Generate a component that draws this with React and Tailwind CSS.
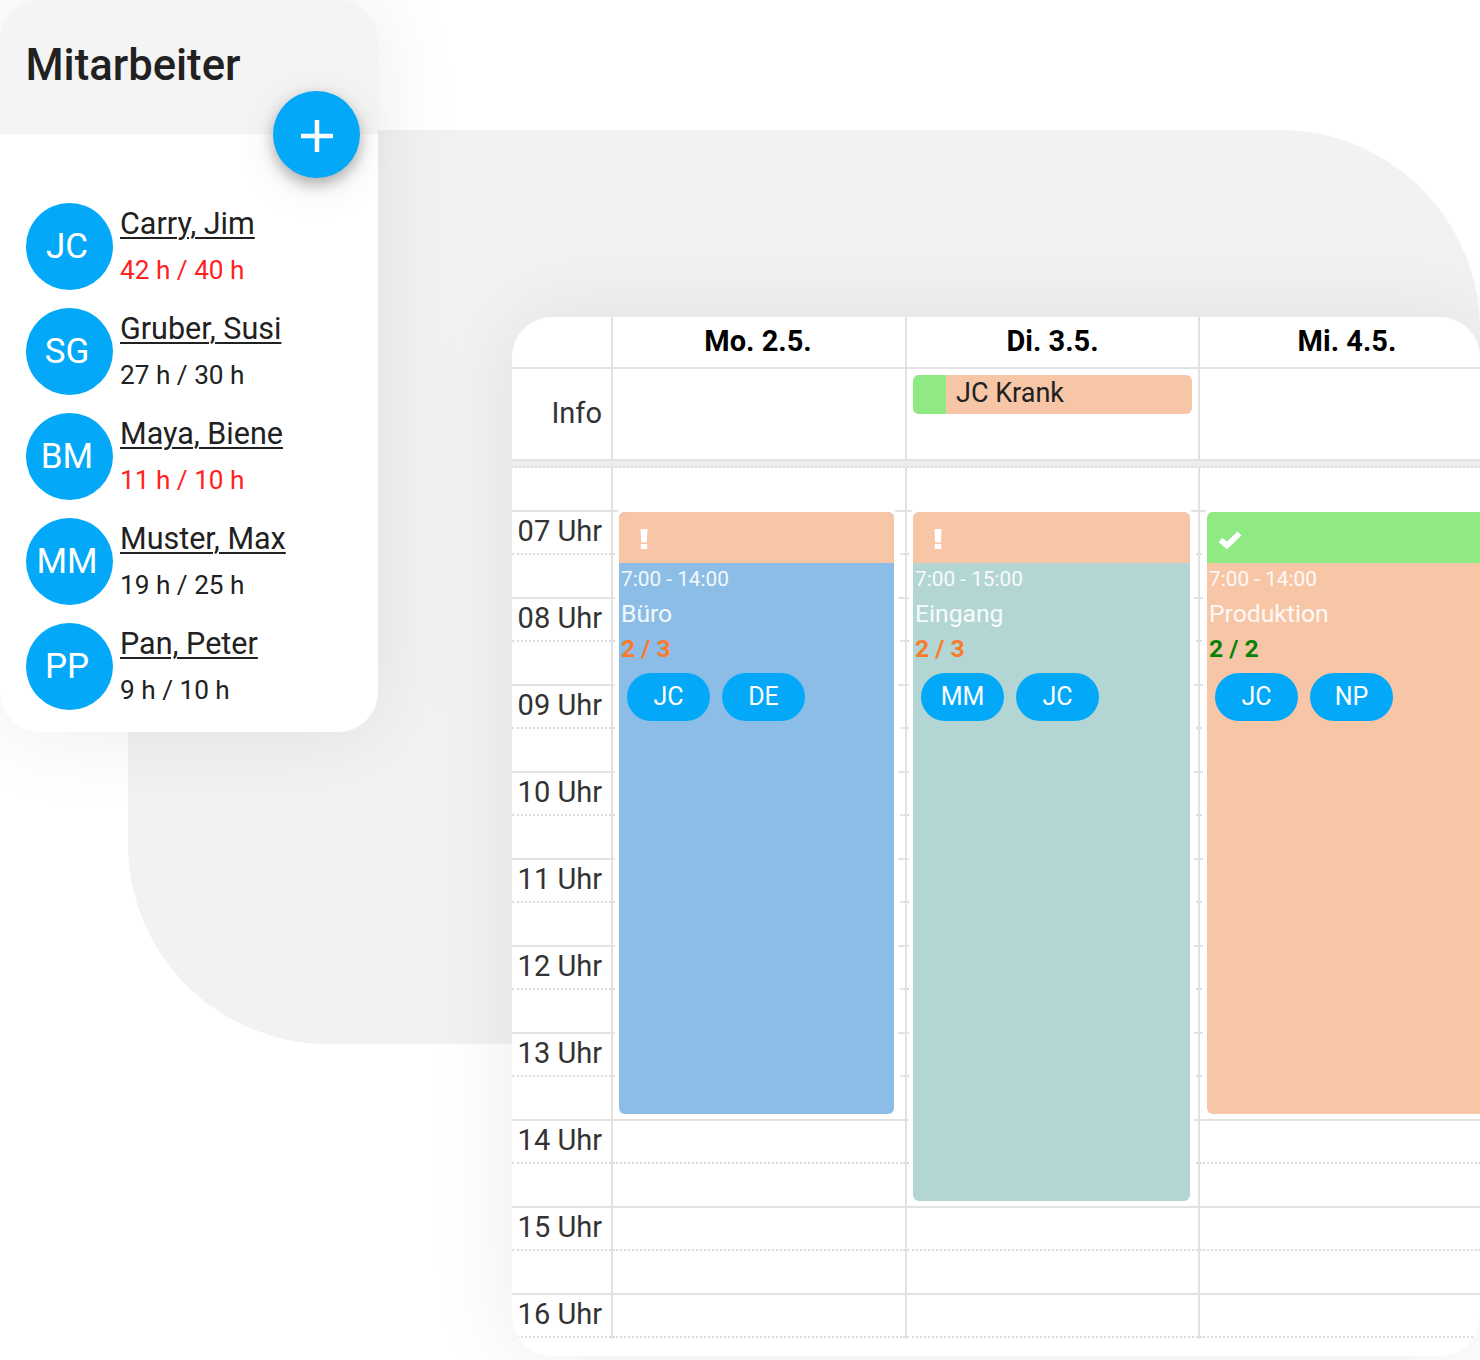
import React from "react";

const people = [
  { i: "JC", n: "Carry, Jim", h: "42 h / 40 h", over: true },
  { i: "SG", n: "Gruber, Susi", h: "27 h / 30 h" },
  { i: "BM", n: "Maya, Biene", h: "11 h / 10 h", over: true },
  { i: "MM", n: "Muster, Max", h: "19 h / 25 h" },
  { i: "PP", n: "Pan, Peter", h: "9 h / 10 h" },
];
const hours = ["07", "08", "09", "10", "11", "12", "13", "14", "15", "16"];
const grid = "grid grid-cols-[101px_294px_293px_280px]";

function Shift({ cls, bodyCls, ok, time, name, count, staff }) {
  return (
    <div className={`absolute top-[40px] border-4 border-white rounded-[10px] ${cls}`}>
      <div className={`h-full rounded-[6px] overflow-hidden ${bodyCls}`}>
        <div className={`h-[51px] flex items-center ${ok ? "bg-[#90ea84] pl-[11px]" : "bg-[#f7c6a7] pl-[21px]"}`}>
          {ok ? (
            <svg width="24" height="18" viewBox="0 0 24 18" className="mt-[5px]">
              <path d="M2.5 9L9 14.5L21.5 2.5" fill="none" stroke="#fff" strokeWidth="5.6" />
            </svg>
          ) : (
            <svg width="8" height="20" viewBox="0 0 8 20" className="mt-[3px]">
              <path d="M0.5 0H7.5L6.8 13.5H1.2Z M0.8 15H7.2V20H0.8Z" fill="#fff" />
            </svg>
          )}
        </div>
        <div className="h-[32px] pl-[2px] text-[20.8px] leading-[32px] text-white/90">{time}</div>
        <div className="h-[34px] mt-[2px] pl-[2px] text-[24.7px] leading-[34px] text-white/90">{name}</div>
        <div className={`h-[34px] mt-[1px] pl-[2px] text-[24.7px] leading-[34px] font-bold ${ok ? "text-[#078207]" : "text-[#fb7b2d]"}`}>{count}</div>
        <div className="mt-[7px] ml-[8px] flex gap-[12px]">
          {staff.map((s) => (
            <div key={s} className="w-[83px] h-[48px] rounded-full bg-[#03a9f8] text-white text-[25px] flex items-center justify-center">{s}</div>
          ))}
        </div>
      </div>
    </div>
  );
}

export default function App() {
  return (
    <div className="relative w-[1480px] h-[1360px] overflow-hidden bg-white text-[#212121] font-['Roboto',sans-serif]">
      <div className="absolute left-[128px] top-[130px] right-0 h-[914px] bg-[#f2f2f2] rounded-tr-[200px] rounded-bl-[200px]" />

      <div className="absolute left-0 top-0 w-[378px] h-[732px] rounded-[40px] bg-white shadow-[0_0_90px_rgba(0,0,0,0.08)]">
        <div className="h-[134px] bg-[#f4f4f4] rounded-t-[40px] pl-[25.5px] pt-[38px] text-[43.6px] leading-[56px] font-medium">Mitarbeiter</div>
        <div className="pl-[26px] pt-[69px] flex flex-col gap-[18px]">
          {people.map((p) => (
            <div key={p.i} className="flex gap-[7px] h-[87px]">
              <div className="w-[87px] h-[87px] rounded-full bg-[#03a9f8] text-white text-[35px] pr-[5px] pt-[1px] flex items-center justify-center">{p.i}</div>
              <div className="pt-[1px]">
                <div className="text-[30.5px] leading-[40px] underline underline-offset-[3px] decoration-[2px]">{p.n}</div>
                <div className={`text-[26.2px] leading-[40px] mt-[6px] ${p.over ? "text-[#ff2222]" : ""}`}>{p.h}</div>
              </div>
            </div>
          ))}
        </div>
        <button className="absolute left-[273px] top-[91px] w-[87px] h-[87px] rounded-full bg-[#03a9f8] flex items-center justify-center shadow-[0_6px_14px_rgba(0,0,0,0.28),0_8px_40px_rgba(0,0,0,0.1)]">
          <svg width="32" height="32" viewBox="0 0 32 32" className="mt-[2px]">
            <path d="M16 0V32M0 16H32" stroke="#fff" strokeWidth="4.5" />
          </svg>
        </button>
      </div>

      <div className="absolute left-[512px] top-[317px] w-[968px] h-[1039px] bg-white rounded-[40px] overflow-hidden shadow-[0_0_90px_rgba(0,0,0,0.08)]">
        <div className={`${grid} h-[52px] border-b-2 border-[#e2e2e2] text-[29px] leading-[48px] font-bold text-black text-center`}>
          <div className="border-r-2 border-[#e2e2e2]" />
          <div className="border-r-2 border-[#e2e2e2] pr-[2px]">Mo. 2.5.</div>
          <div className="border-r-2 border-[#e2e2e2]">Di. 3.5.</div>
          <div className="w-[294px]">Mi. 4.5.</div>
        </div>
        <div className={`${grid} h-[92px] border-b-2 border-[#e2e2e2]`}>
          <div className="border-r-2 border-[#e2e2e2] text-right pr-[9px] pt-[24px] text-[29px] leading-[40px] text-[#333333]">Info</div>
          <div className="border-r-2 border-[#e2e2e2]" />
          <div className="border-r-2 border-[#e2e2e2] pl-[6px] pt-[6px]">
            <div className="w-[279px] h-[39px] rounded-[6px] overflow-hidden bg-[#f7c6a7] flex text-[27px] leading-[36px]">
              <div className="w-[33px] h-full bg-[#90ea84]" />
              <div className="pl-[10px]">JC Krank</div>
            </div>
          </div>
          <div />
        </div>
        <div className="h-[7px] bg-[#eeeeee] border-b-2 border-dotted border-[#dddddd]" />
        <div className="relative">
          <div className={`${grid} h-[42px]`}>
            <div className="border-r-2 border-[#e2e2e2]" />
            <div className="border-r-2 border-[#e2e2e2]" />
            <div className="border-r-2 border-[#e2e2e2]" />
            <div />
          </div>
          {hours.map((h, idx) => (
            <div key={h} className={`${grid} ${idx === 9 ? "h-[46px]" : "h-[87px]"} border-t-2 border-[#e2e2e2]`}>
              {[0, 1, 2, 3].map((c) => (
                <div key={c} className={c < 3 ? "border-r-2 border-[#e2e2e2]" : ""}>
                  <div className="h-[43px] border-b-2 border-dotted border-[#dddddd] text-right pr-[9px] text-[29px] leading-[38px] text-[#333333]">
                    {c === 0 ? `${h} Uhr` : ""}
                  </div>
                </div>
              ))}
            </div>
          ))}
          <Shift cls="left-[103px] w-[283px] h-[610px]" bodyCls="bg-[#8bbde6]" time="7:00 - 14:00" name="Büro" count="2 / 3" staff={["JC", "DE"]} />
          <Shift cls="left-[397px] w-[285px] h-[697px]" bodyCls="bg-[#b3d5d3]" time="7:00 - 15:00" name="Eingang" count="2 / 3" staff={["MM", "JC"]} />
          <Shift cls="left-[691px] w-[289px] h-[610px]" bodyCls="bg-[#f7c6a7]" ok time="7:00 - 14:00" name="Produktion" count="2 / 2" staff={["JC", "NP"]} />
        </div>
      </div>
    </div>
  );
}
